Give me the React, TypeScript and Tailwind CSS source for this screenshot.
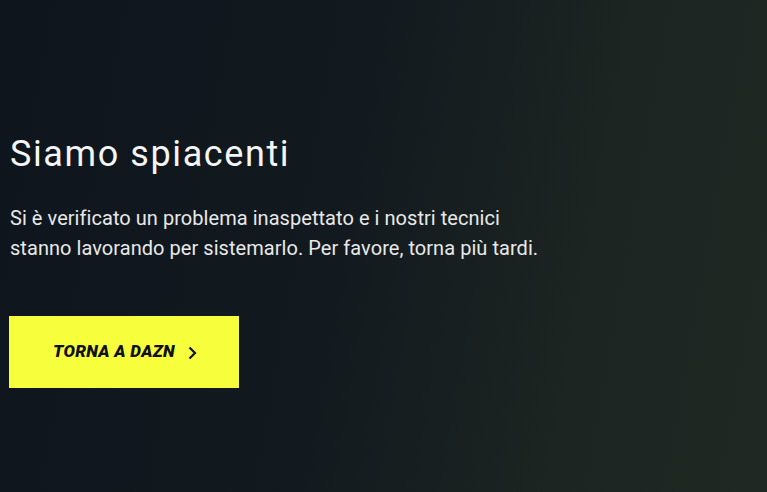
import React from "react";

export default function App() {
  return (
    <div
      className="w-full h-[492px] overflow-hidden bg-[linear-gradient(100deg,#0e151d_0%,#121a1f_45%,#1c2521_75%,#202824_100%)] text-white"
      style={{ fontFamily: "Roboto, 'Liberation Sans', sans-serif" }}
    >
      <div className="flex flex-col pl-[9px] pt-[134px]">
        <h1 className="text-[36px] leading-[40px] font-normal text-[#f5f5f5] pl-[1px] tracking-[1.6px]">Siamo spiacenti</h1>
        <p className="mt-[29px] text-[20px] leading-[30px] text-[#e8e8e8] pl-[1px] tracking-[0.05px]">
          Si è verificato un problema inaspettato e i nostri tecnici
          <br />
          stanno lavorando per sistemarlo. Per favore, torna più tardi.
        </p>
        <div className="mt-[53px]">
          <button className="w-[230px] h-[72px] bg-[#f7ff3c] flex items-center justify-center gap-[12px] text-[#111] pl-[2px]">
            <span className="text-[17px] font-black italic tracking-[0.3px]">TORNA A DAZN</span>
            <svg width="10" height="14" viewBox="0 0 10 14" fill="none" className="mt-[1px]">
              <path d="M2.5 1.5L8 7L2.5 12.5" stroke="#111" strokeWidth="2.2" />
            </svg>
          </button>
        </div>
      </div>
    </div>
  );
}
